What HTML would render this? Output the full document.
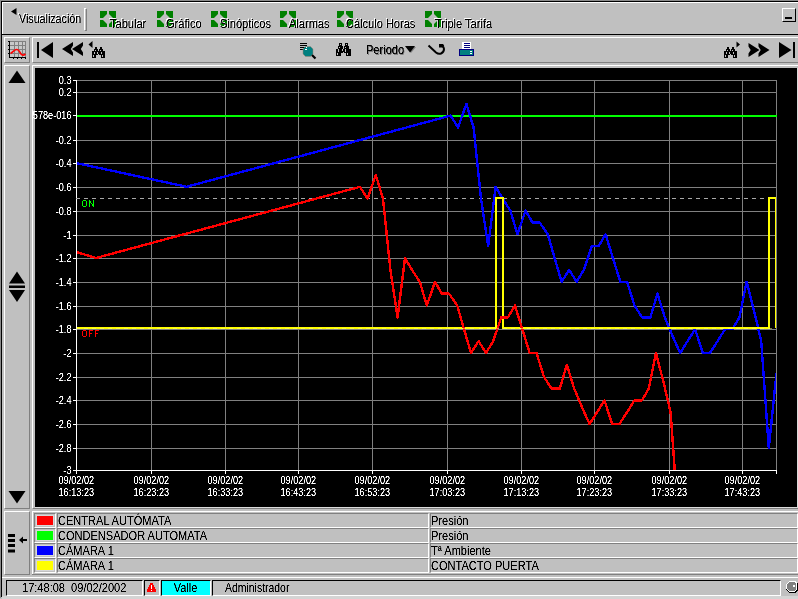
<!DOCTYPE html>
<html><head><meta charset="utf-8">
<style>
*{box-sizing:border-box;margin:0;padding:0}
html,body{width:798px;height:599px;overflow:hidden;background:#c0c0c0}
body{position:relative;font-family:"Liberation Sans",sans-serif;font-size:11px;color:#000}
.a{position:absolute}
.raised{position:absolute;border-top:1px solid #fff;border-left:1px solid #fff;border-bottom:1px solid #808080;border-right:1px solid #808080}
.sunk{position:absolute;border-top:1px solid #808080;border-left:1px solid #808080;border-bottom:1px solid #fff;border-right:1px solid #fff}
.fld{position:absolute;border-top:1px solid #000;border-left:1px solid #000;border-bottom:1px solid #fff;border-right:1px solid #fff}
.t{position:absolute;white-space:nowrap;line-height:13px;font-size:12px;transform:scaleX(0.92);transform-origin:0 0;filter:url(#sh)}
.chart{position:absolute;left:0;top:0;will-change:transform}
svg{display:block}
</style></head><body>
<svg width="0" height="0" style="position:absolute"><filter id="sh" x="-5%" y="-5%" width="110%" height="110%"><feComponentTransfer><feFuncA type="linear" slope="2.2" intercept="-0.45"/></feComponentTransfer></filter></svg>
<!-- outer frame -->
<div class="a" style="left:0;top:0;width:798px;height:1px;background:#8c8c8c"></div>
<div class="a" style="left:0;top:1px;width:798px;height:1px;background:#000"></div>
<div class="a" style="left:0;top:0;width:1px;height:598px;background:#8c8c8c"></div>
<div class="a" style="left:1px;top:1px;width:1px;height:596px;background:#000"></div>
<!-- toolbar 1 -->
<div class="a" style="left:2px;top:2px;width:796px;height:1px;background:#fff"></div>
<div class="a" style="left:2px;top:2px;width:1px;height:32px;background:#fff"></div>
<div class="a" style="left:1px;top:34px;width:797px;height:1px;background:#000"></div>

<svg class="a" style="left:11px;top:8px" width="6" height="7"><path d="M0,3.5L5.5,0V7Z" fill="#000"/></svg>
<div class="t" style="left:19px;top:13px;text-shadow:-1px -1px #fff;transform:scaleX(0.89)">Visualización</div>
<div class="raised" style="left:84px;top:8px;width:3px;height:23px"></div>

<svg class="a" style="left:100px;top:11px" width="16" height="16"><path d="M0,0H7V3L3,7H0Z M9,0H16V7H13L9,3Z M0,9H3L7,13V16H0Z M16,9V16H9V13L13,9Z" fill="#008000"/></svg>
<div class="t" style="left:110px;top:18px;text-shadow:-1px -1px #fff">Tabular</div>
<svg class="a" style="left:157px;top:11px" width="16" height="16"><path d="M0,0H7V3L3,7H0Z M9,0H16V7H13L9,3Z M0,9H3L7,13V16H0Z M16,9V16H9V13L13,9Z" fill="#008000"/></svg>
<div class="t" style="left:166px;top:18px;text-shadow:-1px -1px #fff">Gráfico</div>
<svg class="a" style="left:211px;top:11px" width="16" height="16"><path d="M0,0H7V3L3,7H0Z M9,0H16V7H13L9,3Z M0,9H3L7,13V16H0Z M16,9V16H9V13L13,9Z" fill="#008000"/></svg>
<div class="t" style="left:220px;top:18px;text-shadow:-1px -1px #fff">Sinópticos</div>
<svg class="a" style="left:280px;top:11px" width="16" height="16"><path d="M0,0H7V3L3,7H0Z M9,0H16V7H13L9,3Z M0,9H3L7,13V16H0Z M16,9V16H9V13L13,9Z" fill="#008000"/></svg>
<div class="t" style="left:289px;top:18px;text-shadow:-1px -1px #fff">Alarmas</div>
<svg class="a" style="left:337px;top:11px" width="16" height="16"><path d="M0,0H7V3L3,7H0Z M9,0H16V7H13L9,3Z M0,9H3L7,13V16H0Z M16,9V16H9V13L13,9Z" fill="#008000"/></svg>
<div class="t" style="left:346px;top:18px;text-shadow:-1px -1px #fff">Cálculo Horas</div>
<svg class="a" style="left:425px;top:11px" width="16" height="16"><path d="M0,0H7V3L3,7H0Z M9,0H16V7H13L9,3Z M0,9H3L7,13V16H0Z M16,9V16H9V13L13,9Z" fill="#008000"/></svg>
<div class="t" style="left:435px;top:18px;text-shadow:-1px -1px #fff">Triple Tarifa</div>

<div class="raised" style="left:782px;top:8px;width:14px;height:14px;border-right-color:#000;border-bottom-color:#000"></div>
<div class="a" style="left:785px;top:17px;width:7px;height:2px;background:#000"></div>

<!-- toolbar 2 -->
<div class="raised" style="left:4px;top:37px;width:26px;height:26px"></div>
<svg class="a" style="left:8px;top:40px" width="20" height="20"><rect x="2" y="1" width="16" height="16" fill="#c8c8c8"/><path d="M2,5.5H18M2,9.5H18M2,13.5H18M6.5,1V17M10.5,1V17M14.5,1V17M17.5,1V17M2,1.5H18" stroke="#808080" stroke-width="1" shape-rendering="crispEdges"/><path d="M1.5,1V18M1,17.5H18M0,1.5H1M0,5.5H1M0,9.5H1M0,13.5H1M5.5,18V19M9.5,18V19M13.5,18V19M17.5,18V19" stroke="#000" stroke-width="1.2" shape-rendering="crispEdges"/><path d="M2.5,13.5C5,12 6,10 8.5,9.5C11,9 11.5,12 13,14C14,15.2 15.5,15.5 17.5,14" stroke="#ff0000" stroke-width="1.6" fill="none"/></svg>
<div class="raised" style="left:32px;top:37px;width:766px;height:26px;border-right:none"></div>
<svg class="a" style="left:37px;top:42px" width="17" height="17"><path d="M0,0H2V16H0Z M4,8L16,0V16Z" fill="#000"/></svg>
<svg class="a" style="left:61px;top:41px" width="24" height="17"><path d="M1,8L12,1V4.5L9.8,8L12,11.5V15Z M11,8L22,1V4.5L19.8,8L22,11.5V15Z" fill="#000"/></svg>
<svg class="a" style="left:88px;top:41px" width="6" height="8"><path d="M0.5,3.5L4.5,0V7Z" fill="#000"/></svg>
<svg class="a" style="left:92px;top:47px" width="13" height="11"><path d="M3,0h2v1h-2zM8,0h2v1h-2zM3,1h2v1h-2zM8,1h2v1h-2zM2,2h4v1h-4zM7,2h4v1h-4zM2,3h1v1h-1zM4,3h2v1h-2zM7,3h1v1h-1zM9,3h2v1h-2zM0,4h13v1h-13zM0,5h2v1h-2zM3,5h2v1h-2zM6,5h3v1h-3zM10,5h3v1h-3zM0,6h2v1h-2zM3,6h2v1h-2zM6,6h3v1h-3zM10,6h3v1h-3zM0,7h6v1h-6zM7,7h6v1h-6zM0,8h1v1h-1zM2,8h2v1h-2zM9,8h1v1h-1zM11,8h2v1h-2zM0,9h1v1h-1zM2,9h2v1h-2zM9,9h1v1h-1zM11,9h2v1h-2zM0,10h4v1h-4zM9,10h4v1h-4z" fill="#000" shape-rendering="crispEdges"/></svg>
<svg class="a" style="left:296px;top:40px" width="22" height="22"><path d="M4,3.5H11M4,5.5H11M4,7.5H11M4,9.5H9" stroke="#000" stroke-width="1" shape-rendering="crispEdges"/><path d="M9.5,6.5H14.5L17,9V14L14.5,16.5H9.5L7,14V9Z" fill="#008080" stroke="#a08070" stroke-width="0.5"/><path d="M10,7.5H11M8.5,9.5H11" stroke="#fff" stroke-width="1" shape-rendering="crispEdges"/><path d="M16,15L19.5,18.5" stroke="#000" stroke-width="2.2"/></svg>
<svg class="a" style="left:336px;top:43px" width="15" height="13"><path d="M3,0h3v1h-3zM9,0h3v1h-3zM3,1h1v1h-1zM5,1h1v1h-1zM9,1h1v1h-1zM11,1h1v1h-1zM3,2h3v1h-3zM9,2h3v1h-3zM2,3h5v1h-5zM8,3h5v1h-5zM2,4h1v1h-1zM4,4h3v1h-3zM8,4h1v1h-1zM10,4h3v1h-3zM2,5h5v1h-5zM8,5h5v1h-5zM0,6h2v1h-2zM3,6h3v1h-3zM7,6h2v1h-2zM10,6h5v1h-5zM0,7h2v1h-2zM3,7h3v1h-3zM7,7h2v1h-2zM10,7h5v1h-5zM0,8h2v1h-2zM3,8h6v1h-6zM10,8h5v1h-5zM0,9h7v1h-7zM8,9h7v1h-7zM0,10h1v1h-1zM2,10h3v1h-3zM10,10h1v1h-1zM12,10h3v1h-3zM0,11h1v1h-1zM2,11h3v1h-3zM10,11h1v1h-1zM12,11h3v1h-3zM0,12h5v1h-5zM10,12h5v1h-5z" fill="#000" shape-rendering="crispEdges"/></svg>
<div class="t" style="left:366px;top:44px;text-shadow:1px 1px #808080">Periodo</div>
<svg class="a" style="left:405px;top:45px" width="12" height="9"><path d="M1,2H11L6,8Z" fill="#808080"/><path d="M0,1H10L5,7.5Z" fill="#000"/></svg>
<svg class="a" style="left:427px;top:43px" width="20" height="13"><path d="M1.5,2.5L9,9.5Q11.5,11.5 14,10.5Q17,9 17,6Q17,4 15,2.8" stroke="#000" stroke-width="2" fill="none"/><path d="M12,1H16L17.2,2.5L15.5,4.5H12Z" fill="#000"/></svg>
<svg class="a" style="left:459px;top:42px" width="15" height="14" shape-rendering="crispEdges"><rect x="3" y="0" width="9" height="7" fill="#fff"/><path d="M5,1.5H11M5,3.5H11M5,5.5H11" stroke="#000080" stroke-width="1"/><rect x="0" y="7" width="15" height="7" fill="#000080"/><rect x="1" y="8" width="13" height="5" fill="#008080"/><rect x="11" y="9" width="2" height="1" fill="#fff"/><rect x="11" y="11" width="2" height="1" fill="#fff"/></svg>
<svg class="a" style="left:724px;top:47px" width="13" height="11"><path d="M3,0h2v1h-2zM8,0h2v1h-2zM3,1h2v1h-2zM8,1h2v1h-2zM2,2h4v1h-4zM7,2h4v1h-4zM2,3h1v1h-1zM4,3h2v1h-2zM7,3h1v1h-1zM9,3h2v1h-2zM0,4h13v1h-13zM0,5h2v1h-2zM3,5h2v1h-2zM6,5h3v1h-3zM10,5h3v1h-3zM0,6h2v1h-2zM3,6h2v1h-2zM6,6h3v1h-3zM10,6h3v1h-3zM0,7h6v1h-6zM7,7h6v1h-6zM0,8h1v1h-1zM2,8h2v1h-2zM9,8h1v1h-1zM11,8h2v1h-2zM0,9h1v1h-1zM2,9h2v1h-2zM9,9h1v1h-1zM11,9h2v1h-2zM0,10h4v1h-4zM9,10h4v1h-4z" fill="#000" shape-rendering="crispEdges"/></svg>
<svg class="a" style="left:736px;top:41px" width="5" height="7"><path d="M0.5,0.5L4,3.5L0.5,6.5Z" fill="#000"/></svg>
<svg class="a" style="left:748px;top:42px" width="24" height="17"><path d="M0.5,1L11.5,8L0.5,15V11.5L2.7,8L0.5,4.5Z M10.5,1L21.5,8L10.5,15V11.5L12.7,8L10.5,4.5Z" fill="#000"/></svg>
<svg class="a" style="left:779px;top:42px" width="17" height="17"><path d="M0,0L12.5,8L0,16Z M14,0H16V16H14Z" fill="#000"/></svg>

<!-- main left panel -->
<div class="raised" style="left:4px;top:65px;width:26px;height:444px"></div>
<svg class="a" style="left:8px;top:70px" width="18" height="14"><path d="M9,0.5L17.5,13H0.5Z" fill="#000"/></svg>
<svg class="a" style="left:8px;top:271px" width="18" height="32"><path d="M9,0.5L17,12.5H1Z M1,14.5H17V17H1Z M1,19H17L9,31Z" fill="#000"/></svg>
<svg class="a" style="left:8px;top:491px" width="18" height="14"><path d="M0.5,0H17.5L9,12.5Z" fill="#000"/></svg>

<!-- chart panel -->
<div class="raised" style="left:32px;top:65px;width:766px;height:444px;border-right:none"></div>
<div class="a" style="left:35px;top:507px;width:762px;height:1px;background:#dcdcdc"></div>
<div class="a" style="left:797px;top:68px;width:1px;height:440px;background:#dcdcdc"></div>
<svg class="chart" width="798" height="599" viewBox="0 0 798 599">
<rect x="35" y="68" width="762" height="439" fill="#000"/>
<path d="M76,80.5H777M76,92.5H777M76,140.5H777M76,163.5H777M76,187.5H777M76,211.5H777M76,235.5H777M76,258.5H777M76,282.5H777M76,306.5H777M76,329.5H777M76,353.5H777M76,377.5H777M76,400.5H777M76,424.5H777M76,448.5H777M151.5,80V470M225.5,80V470M298.5,80V470M372.5,80V470M447.5,80V470M521.5,80V470M594.5,80V470M669.5,80V470M742.5,80V470M776.5,80V470" stroke="#808080" stroke-width="1" fill="none" shape-rendering="crispEdges"/>
<path d="M73,80.5H76M73,92.5H76M73,140.5H76M73,163.5H76M73,187.5H76M73,211.5H76M73,235.5H76M73,258.5H76M73,282.5H76M73,306.5H76M73,329.5H76M73,353.5H76M73,377.5H76M73,400.5H76M73,424.5H76M73,448.5H76M73,115.5H76M73,470.5H76M76.5,470V474M151.5,470V474M225.5,470V474M298.5,470V474M372.5,470V474M447.5,470V474M521.5,470V474M594.5,470V474M669.5,470V474M742.5,470V474M776.5,470V474M76.5,80V474M76,470.5H777" stroke="#fff" stroke-width="1" fill="none" shape-rendering="crispEdges"/>
<path d="M76,198.5H776" stroke="#a8a8a8" stroke-width="1" stroke-dasharray="4 4.05" shape-rendering="crispEdges"/>
<path d="M77,115.5H777" stroke="#00ff00" stroke-width="2" shape-rendering="crispEdges"/>
<defs><clipPath id="pc"><rect x="77" y="80" width="699" height="390"/></clipPath></defs>
<g clip-path="url(#pc)" fill="none" stroke-width="2.4" stroke-linejoin="round" shape-rendering="crispEdges">
<polyline points="76.5,163.1 186.6,186.8 450.6,115.6 458.1,127.5 466.4,103.8 473.6,127.5 481.0,198.7 488.2,246.2 495.6,186.8 502.6,198.7 510.4,210.6 517.4,234.3 525.6,210.6 532.4,222.4 539.6,222.4 547.8,234.3 554.6,258.0 561.6,281.8 569.2,269.9 576.6,281.8 583.8,269.9 591.8,246.2 598.6,246.2 605.6,234.3 612.9,258.0 620.3,281.8 627.1,281.8 634.5,305.5 642.1,317.4 650.4,317.4 657.4,293.6 664.8,317.4 672.2,335.2 680.2,353.0 687.6,341.1 695.1,329.2 702.8,353.0 709.9,353.0 717.6,341.1 725.0,329.2 732.5,329.2 739.4,317.4 746.6,281.8 754.2,311.4 761.2,341.1 768.8,447.9 776.5,373.1" stroke="#0000ff"/>
<polyline points="76.0,328.0 496.0,328.0 496.0,198.0 503.0,198.0 503.0,328.0 769.0,328.0 769.0,198.0 776.0,198.0 776.0,328.0" stroke="#ffff00" shape-rendering="crispEdges"/>
<polyline points="76.5,252.1 96.0,258.0 360.0,186.8 367.5,198.7 375.8,175.0 383.0,198.7 390.4,269.9 397.6,317.4 405.0,258.0 412.0,269.9 419.8,281.8 426.8,305.5 435.0,281.8 441.8,293.6 449.0,293.6 457.2,305.5 464.0,329.2 471.0,353.0 478.6,341.1 486.0,353.0 493.2,341.1 501.2,317.4 508.0,317.4 515.0,305.5 522.3,329.2 529.7,353.0 536.5,353.0 543.9,376.7 551.5,388.6 559.8,388.6 566.8,364.8 574.2,388.6 581.6,406.4 589.6,424.2 597.0,412.3 604.5,400.4 612.2,424.2 619.3,424.2 627.0,412.3 634.4,400.4 641.9,400.4 648.8,388.6 656.0,353.0 663.6,382.6 670.6,412.3 678.2,519.1" stroke="#ff0000"/>
</g>
<path d="M76,328.5H776" stroke="#ffff80" stroke-opacity="0.5" stroke-width="1" stroke-dasharray="4 4.05" shape-rendering="crispEdges"/>
<g font-family="Liberation Sans" font-size="10" fill="#fff" filter="url(#sh)"><text transform="matrix(0.915,0,0,1,71.50,83.60)" text-anchor="end">0.3</text><text transform="matrix(0.915,0,0,1,71.50,95.60)" text-anchor="end">0.2</text><text transform="matrix(0.915,0,0,1,71.50,143.60)" text-anchor="end">-0.2</text><text transform="matrix(0.915,0,0,1,71.50,166.60)" text-anchor="end">-0.4</text><text transform="matrix(0.915,0,0,1,71.50,190.60)" text-anchor="end">-0.6</text><text transform="matrix(0.915,0,0,1,71.50,214.60)" text-anchor="end">-0.8</text><text transform="matrix(0.915,0,0,1,71.50,238.60)" text-anchor="end">-1</text><text transform="matrix(0.915,0,0,1,71.50,261.60)" text-anchor="end">-1.2</text><text transform="matrix(0.915,0,0,1,71.50,285.60)" text-anchor="end">-1.4</text><text transform="matrix(0.915,0,0,1,71.50,309.60)" text-anchor="end">-1.6</text><text transform="matrix(0.915,0,0,1,71.50,332.60)" text-anchor="end">-1.8</text><text transform="matrix(0.915,0,0,1,71.50,356.60)" text-anchor="end">-2</text><text transform="matrix(0.915,0,0,1,71.50,380.60)" text-anchor="end">-2.2</text><text transform="matrix(0.915,0,0,1,71.50,403.60)" text-anchor="end">-2.4</text><text transform="matrix(0.915,0,0,1,71.50,427.60)" text-anchor="end">-2.6</text><text transform="matrix(0.915,0,0,1,71.50,451.60)" text-anchor="end">-2.8</text><text transform="matrix(0.915,0,0,1,71.50,118.60)" text-anchor="end">578e-016</text><text transform="matrix(0.915,0,0,1,71.50,473.60)" text-anchor="end">-3</text><text transform="matrix(0.915,0,0,1,76.30,484.00)" text-anchor="middle">09/02/02</text><text transform="matrix(0.915,0,0,1,76.30,496.40)" text-anchor="middle">16:13:23</text><text transform="matrix(0.915,0,0,1,151.30,484.00)" text-anchor="middle">09/02/02</text><text transform="matrix(0.915,0,0,1,151.30,496.40)" text-anchor="middle">16:23:23</text><text transform="matrix(0.915,0,0,1,225.30,484.00)" text-anchor="middle">09/02/02</text><text transform="matrix(0.915,0,0,1,225.30,496.40)" text-anchor="middle">16:33:23</text><text transform="matrix(0.915,0,0,1,298.30,484.00)" text-anchor="middle">09/02/02</text><text transform="matrix(0.915,0,0,1,298.30,496.40)" text-anchor="middle">16:43:23</text><text transform="matrix(0.915,0,0,1,372.30,484.00)" text-anchor="middle">09/02/02</text><text transform="matrix(0.915,0,0,1,372.30,496.40)" text-anchor="middle">16:53:23</text><text transform="matrix(0.915,0,0,1,447.30,484.00)" text-anchor="middle">09/02/02</text><text transform="matrix(0.915,0,0,1,447.30,496.40)" text-anchor="middle">17:03:23</text><text transform="matrix(0.915,0,0,1,521.30,484.00)" text-anchor="middle">09/02/02</text><text transform="matrix(0.915,0,0,1,521.30,496.40)" text-anchor="middle">17:13:23</text><text transform="matrix(0.915,0,0,1,594.30,484.00)" text-anchor="middle">09/02/02</text><text transform="matrix(0.915,0,0,1,594.30,496.40)" text-anchor="middle">17:23:23</text><text transform="matrix(0.915,0,0,1,669.30,484.00)" text-anchor="middle">09/02/02</text><text transform="matrix(0.915,0,0,1,669.30,496.40)" text-anchor="middle">17:33:23</text><text transform="matrix(0.915,0,0,1,742.30,484.00)" text-anchor="middle">09/02/02</text><text transform="matrix(0.915,0,0,1,742.30,496.40)" text-anchor="middle">17:43:23</text></g>
<path d="M83,200h3v1h-3zM82,201h1v5h-1zM86,201h1v5h-1zM83,206h3v1h-3zM89,200h1v7h-1zM93,200h1v7h-1zM90,201h1v2h-1zM91,203h1v1h-1zM92,204h1v2h-1z" fill="#00ff00" shape-rendering="crispEdges"/>
<path d="M83,330h3v1h-3zM82,331h1v5h-1zM86,331h1v5h-1zM83,336h3v1h-3zM89,330h4v1h-4zM89,331h1v6h-1zM90,333h2v1h-2zM95,330h4v1h-4zM95,331h1v6h-1zM96,333h2v1h-2z" fill="#ff0000" shape-rendering="crispEdges"/>
</svg>

<!-- legend left panel -->
<div class="raised" style="left:4px;top:511px;width:26px;height:64px"></div>
<svg class="a" style="left:8px;top:534px" width="20" height="20"><path d="M0,0H7V3H0Z M0,5H7V8H0Z M0,10H7V13H0Z M0,15.5H7V18.5H0Z" fill="#000"/><path d="M11,6L15,2.5V5H19V7H15V9.5Z" fill="#000"/></svg>

<!-- legend panel -->
<div class="a" style="left:32px;top:511px;width:766px;height:1px;background:#fff"></div>
<div class="a" style="left:32px;top:511px;width:1px;height:64px;background:#fff"></div>
<div class="sunk" style="left:34px;top:513px;width:22px;height:15px"></div>
<div class="a" style="left:36px;top:515px;width:18px;height:11px;background:#d8d8d8"></div>
<div class="a" style="left:37px;top:516px;width:16px;height:9px;background:#ff0000"></div>
<div class="sunk" style="left:57px;top:513px;width:372px;height:15px"></div>
<div class="t" style="left:58px;top:515px">CENTRAL AUTÓMATA</div>
<div class="sunk" style="left:430px;top:513px;width:368px;height:15px"></div>
<div class="t" style="left:431px;top:515px">Presión</div>
<div class="sunk" style="left:34px;top:528px;width:22px;height:15px"></div>
<div class="a" style="left:36px;top:530px;width:18px;height:11px;background:#d8d8d8"></div>
<div class="a" style="left:37px;top:531px;width:16px;height:9px;background:#00ff00"></div>
<div class="sunk" style="left:57px;top:528px;width:372px;height:15px"></div>
<div class="t" style="left:58px;top:530px">CONDENSADOR AUTOMATA</div>
<div class="sunk" style="left:430px;top:528px;width:368px;height:15px"></div>
<div class="t" style="left:431px;top:530px">Presión</div>
<div class="sunk" style="left:34px;top:543px;width:22px;height:15px"></div>
<div class="a" style="left:36px;top:545px;width:18px;height:11px;background:#d8d8d8"></div>
<div class="a" style="left:37px;top:546px;width:16px;height:9px;background:#0000ff"></div>
<div class="sunk" style="left:57px;top:543px;width:372px;height:15px"></div>
<div class="t" style="left:58px;top:545px">CÁMARA 1</div>
<div class="sunk" style="left:430px;top:543px;width:368px;height:15px"></div>
<div class="t" style="left:431px;top:545px">Tª Ambiente</div>
<div class="sunk" style="left:34px;top:558px;width:22px;height:15px"></div>
<div class="a" style="left:36px;top:560px;width:18px;height:11px;background:#d8d8d8"></div>
<div class="a" style="left:37px;top:561px;width:16px;height:9px;background:#ffff00"></div>
<div class="sunk" style="left:57px;top:558px;width:372px;height:15px"></div>
<div class="t" style="left:58px;top:560px">CÁMARA 1</div>
<div class="sunk" style="left:430px;top:558px;width:368px;height:15px"></div>
<div class="t" style="left:431px;top:560px">CONTACTO PUERTA</div>
<div class="a" style="left:32px;top:574px;width:766px;height:1px;background:#808080"></div>

<!-- status bar -->
<div class="a" style="left:2px;top:577px;width:796px;height:1px;background:#fff"></div>
<div class="fld" style="left:6px;top:580px;width:137px;height:16px"></div>
<div class="t" style="left:22px;top:582px">17:48:08&nbsp;&nbsp;09/02/2002</div>
<div class="fld" style="left:144px;top:580px;width:16px;height:16px"></div>
<svg class="a" style="left:147px;top:583px" width="9" height="9" shape-rendering="crispEdges"><path d="M3,0h3v2h-3z M2,2h5v2h-5z M1,4h7v2h-7z M0,6h9v3h-9z" fill="#ff0000"/><path d="M4,2h1v4h-1z M4,7h1v1h-1z" fill="#fff"/></svg>
<div class="fld" style="left:161px;top:580px;width:50px;height:16px;background:#00ffff"></div>
<div class="t" style="left:161px;top:582px;width:49px;text-align:center;transform-origin:50% 0">Valle</div>
<div class="fld" style="left:212px;top:580px;width:569px;height:16px"></div>
<div class="t" style="left:225px;top:582px;transform:scaleX(0.87)">Administrador</div>
<svg class="a" style="left:786px;top:581px" width="12" height="12" shape-rendering="crispEdges"><path d="M3,0H9L12,3V9L9,12H3L0,9V3Z" fill="#000"/><path d="M3,0H9L11,2V9L8,11H3L0,8V3Z" fill="#fff"/><path d="M3.5,1H8.5L10,2.5V8.5L8,10H3.5L1,7.5V3.5Z" fill="#808080"/><rect x="7" y="4" width="2" height="2" fill="#fff"/></svg>
<div class="a" style="left:2px;top:596px;width:796px;height:3px;background:#d4d4d4"></div>
</body></html>
